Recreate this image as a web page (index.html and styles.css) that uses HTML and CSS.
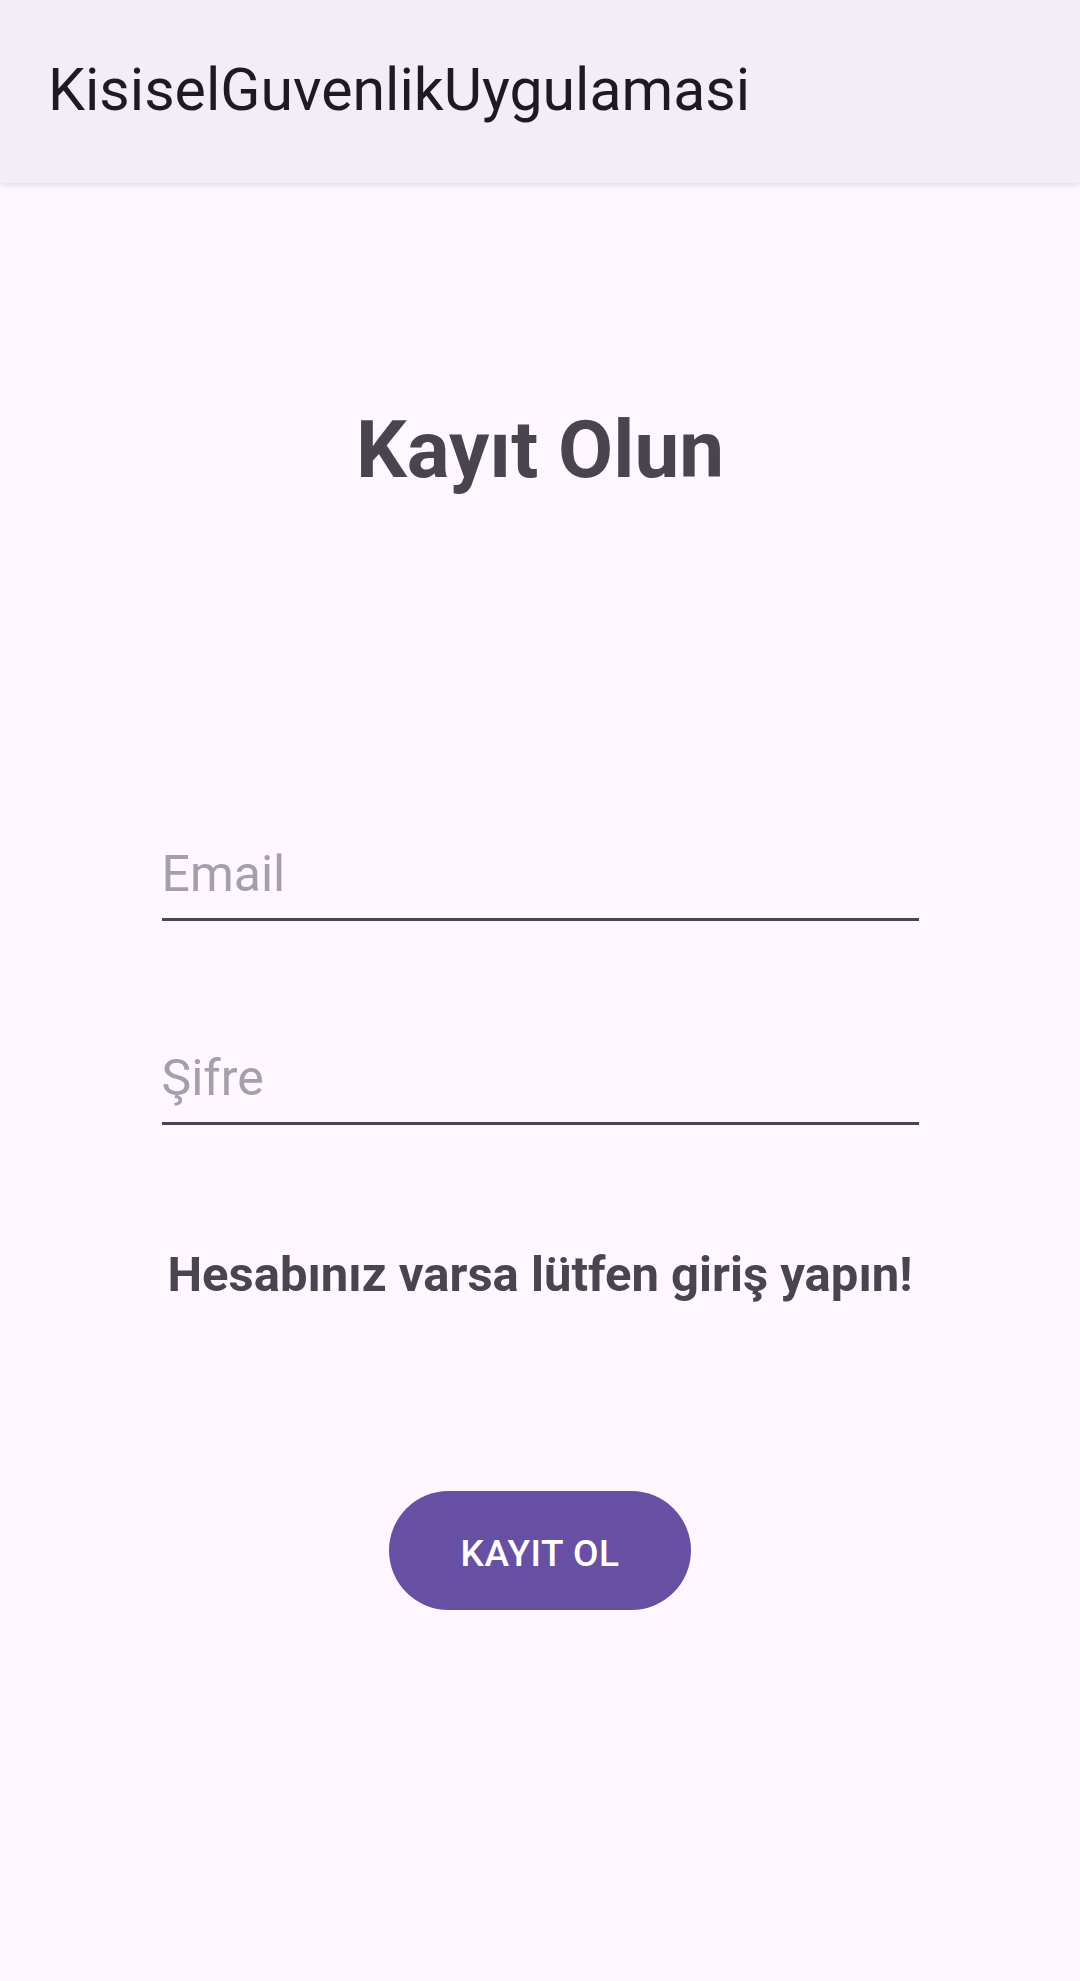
FILE: index.html
```html
<!DOCTYPE html>
<html lang="tr">
<head>
<meta charset="utf-8">
<title>KisiselGuvenlikUygulamasi</title>
<link rel="stylesheet" href="styles.css">
</head>
<body>
<header class="appbar">
  <h1 class="appbar-title">KisiselGuvenlikUygulamasi</h1>
</header>
<main class="content">
  <h2 class="heading">Kayıt Olun</h2>
  <div class="form">
    <div class="field"><span class="hint">Email</span></div>
    <div class="field field-second"><span class="hint">Şifre</span></div>
  </div>
  <p class="login-link">Hesabınız varsa lütfen giriş yapın!</p>
  <button class="primary-btn" type="button">KAYIT OL</button>
</main>
</body>
</html>
```
FILE: styles.css
```css
html, body {
  margin: 0;
  padding: 0;
}
body {
  width: 1080px;
  min-height: 1981px;
  background: #FEF7FF;
  font-family: Roboto, "Noto Sans", "Liberation Sans", sans-serif;
  overflow: hidden;
}
.appbar {
  height: 183px;
  background: #F3EDF7;
  display: flex;
  align-items: center;
  padding-left: 48px;
  box-shadow: 0 2px 6px rgba(0, 0, 0, 0.12);
  position: relative;
  z-index: 1;
}
.appbar-title {
  margin: 0;
  font-size: 59px;
  font-weight: 400;
  line-height: 68px;
  color: #1D1B20;
  margin-top: -3px;
}
.content {
  display: flex;
  flex-direction: column;
  align-items: center;
}
.heading {
  margin: 221px 0 0;
  font-size: 80px;
  line-height: 93px;
  font-weight: 700;
  color: #49454F;
}
.form {
  width: 757px;
  margin-top: 347px;
  display: flex;
  flex-direction: column;
}
.field {
  height: 60px;
  padding-bottom: 14px;
  border-bottom: 3px solid #49454F;
  font-size: 50px;
  line-height: 60px;
}
.field-second {
  margin-top: 127px;
}
.hint {
  color: #A49FA8;
}
.login-link {
  margin: 121px 0 0;
  font-size: 49px;
  line-height: 57px;
  font-weight: 700;
  color: #49454F;
  text-align: center;
}
.primary-btn {
  margin-top: 188px;
  width: 302px;
  height: 119px;
  border: none;
  border-radius: 60px;
  background: #6750A4;
  color: #FFFFFF;
  font-family: Roboto, "Noto Sans", "Liberation Sans", sans-serif;
  font-size: 37px;
  font-weight: 500;
  letter-spacing: 0.5px;
  padding: 6px 0 0;
  display: flex;
  align-items: center;
  justify-content: center;
}
```
